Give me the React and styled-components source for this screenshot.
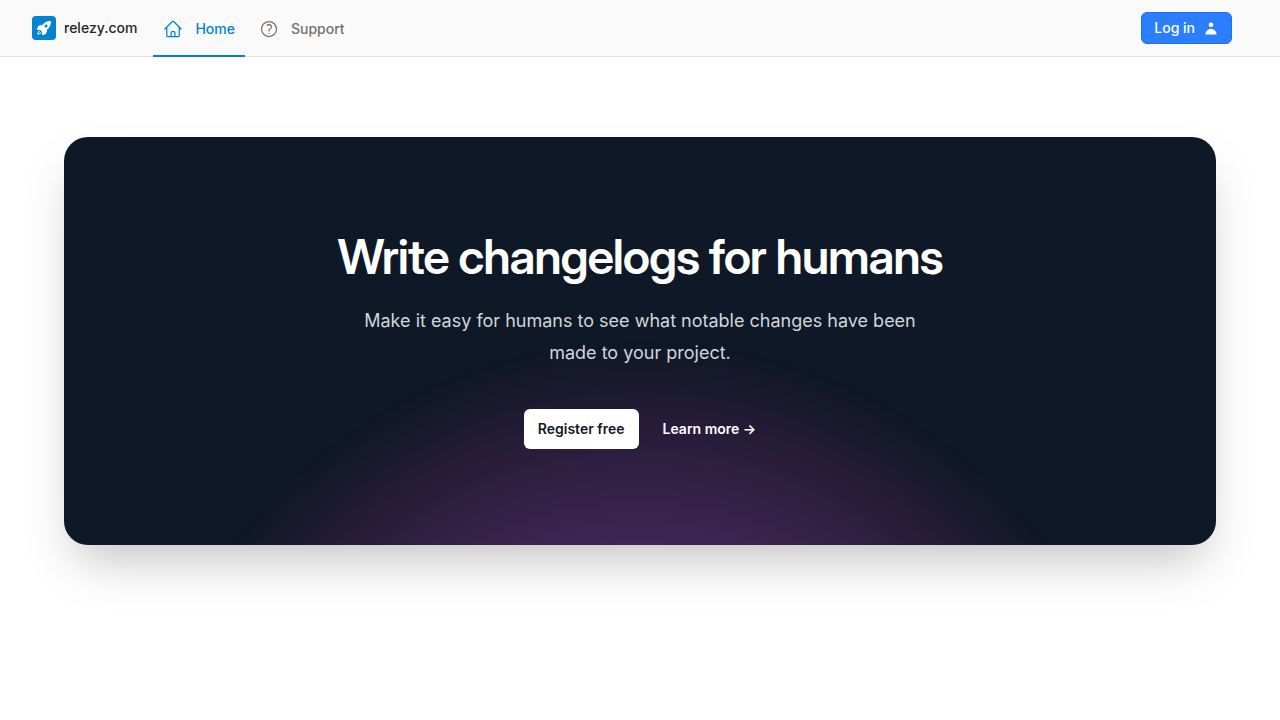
import styled, { createGlobalStyle } from 'styled-components';
import { HiUser } from 'react-icons/hi';
import { HiOutlineHome, HiOutlineQuestionMarkCircle, HiRocketLaunch } from 'react-icons/hi2';

const GlobalStyle = createGlobalStyle`
  *, *::before, *::after {
    box-sizing: border-box;
  }

  body {
    margin: 0;
    background: #ffffff;
    color: #292524;
    font-family: Inter, 'Liberation Sans', sans-serif;
    font-size: 14px;
    line-height: 20px;
  }

  h2, p {
    margin: 0;
  }

  a {
    color: inherit;
    text-decoration: none;
  }
`;

const Header = styled.header`
  display: flex;
  align-items: stretch;
  gap: 16px;
  min-height: 57px;
  padding: 0 48px 0 32px;
  background: #fafafa;
  border-bottom: 1px solid #e2e2e2;
`;

const Brand = styled.a`
  display: flex;
  align-items: center;
  gap: 8px;
  font-weight: 500;
`;

const Logo = styled.span`
  display: flex;
  align-items: center;
  justify-content: center;
  width: 24px;
  height: 24px;
  border-radius: 4px;
  background: #0084d1;
  color: #ffffff;
`;

const Nav = styled.nav`
  display: flex;
  flex: 1;
  gap: 4px;
  margin-bottom: -1px;
`;

const NavLink = styled.a`
  display: flex;
  align-items: center;
  gap: 12px;
  padding: 2px 10px 0;
  border-bottom: 2px solid ${({ $active }) => ($active ? '#0084c4' : 'transparent')};
  color: ${({ $active }) => ($active ? '#0084d1' : '#79716b')};
  font-weight: 500;
`;

const LoginButton = styled.button`
  display: flex;
  align-items: center;
  align-self: center;
  gap: 8px;
  height: 32px;
  padding: 0 12px;
  border: 1px solid #1f6fec;
  border-radius: 6px;
  background: #2b7fff;
  color: #ffffff;
  font: inherit;
  font-weight: 500;
  cursor: pointer;
`;

const Main = styled.main`
  padding: 80px 64px;
`;

const Panel = styled.section`
  position: relative;
  isolation: isolate;
  overflow: hidden;
  padding: 96px 64px;
  border-radius: 24px;
  background: #0f1826;
  box-shadow: 0 25px 50px -12px rgba(0, 0, 0, 0.25);
  text-align: center;
`;

const Title = styled.h2`
  color: #ffffff;
  font-family: 'Inter Display', Inter, 'Liberation Sans', sans-serif;
  font-size: 48px;
  font-weight: 600;
  line-height: 48px;
  letter-spacing: -0.025em;
`;

const Lead = styled.p`
  max-width: 576px;
  margin: 24px auto 0;
  color: #d1d5dc;
  font-size: 18px;
  line-height: 32px;
`;

const Actions = styled.div`
  display: flex;
  align-items: center;
  justify-content: center;
  gap: 24px;
  margin-top: 40px;
`;

const RegisterLink = styled.a`
  padding: 10px 14px;
  border-radius: 6px;
  background: #ffffff;
  color: #101828;
  font-weight: 600;
`;

const MoreLink = styled.a`
  color: #ffffff;
  font-weight: 600;
`;

const Glow = styled.svg`
  position: absolute;
  top: 50%;
  left: 50%;
  z-index: -1;
  width: 1024px;
  height: 1024px;
  transform: translateX(-50%);
  mask-image: radial-gradient(closest-side, white, transparent);
`;

const App = () => {
  return (
    <>
      <GlobalStyle />
      <Header>
        <Brand href="#">
          <Logo>
            <HiRocketLaunch size={16} />
          </Logo>
          relezy.com
        </Brand>
        <Nav>
          <NavLink href="#" $active aria-current="page">
            <HiOutlineHome size={20} />
            Home
          </NavLink>
          <NavLink href="#support">
            <HiOutlineQuestionMarkCircle size={20} />
            Support
          </NavLink>
        </Nav>
        <LoginButton type="button">
          Log in
          <HiUser size={16} />
        </LoginButton>
      </Header>
      <Main>
        <Panel>
          <Title>Write changelogs for humans</Title>
          <Lead>
            Make it easy for humans to see what notable changes have been made to your project.
          </Lead>
          <Actions>
            <RegisterLink href="#register">Register free</RegisterLink>
            <MoreLink href="#more">Learn more →</MoreLink>
          </Actions>
          <Glow viewBox="0 0 1024 1024" aria-hidden="true">
            <circle cx="512" cy="512" r="512" fill="url(#glow)" fillOpacity="0.7" />
            <defs>
              <radialGradient id="glow">
                <stop stopColor="#7775D6" />
                <stop offset="1" stopColor="#E935C1" />
              </radialGradient>
            </defs>
          </Glow>
        </Panel>
      </Main>
    </>
  );
};

export default App;
